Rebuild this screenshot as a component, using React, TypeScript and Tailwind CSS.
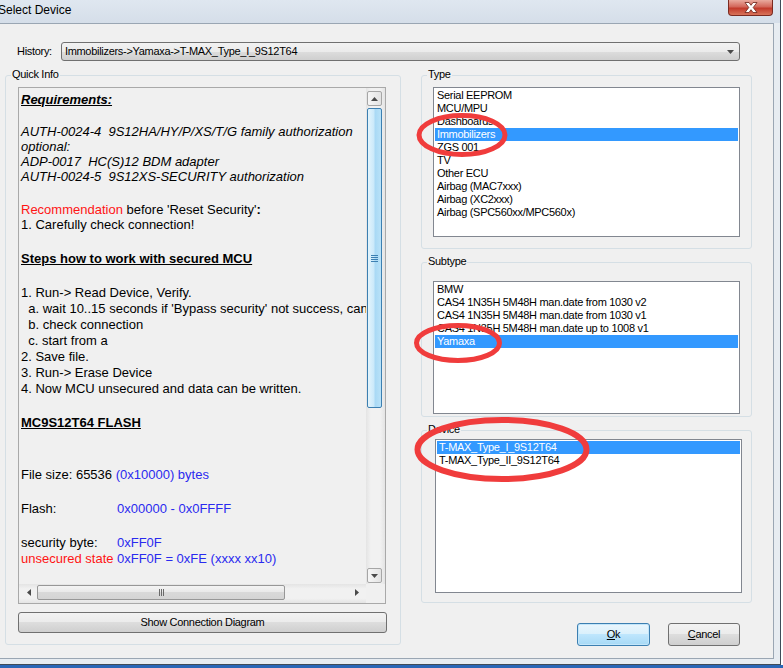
import React from 'react';

const UI = "font-['Liberation_Sans',Arial,sans-serif] text-[11px] tracking-[-0.3px] text-black";
const BTN =
  'border border-[#707070] rounded-[3px] bg-[linear-gradient(#f2f2f2,#ebebeb_50%,#dddddd_50%,#cfcfcf)]';

const typeItems = [
  'Serial EEPROM',
  'MCU/MPU',
  'Dashboards',
  'Immobilizers',
  'ZGS 001',
  'TV',
  'Other ECU',
  'Airbag (MAC7xxx)',
  'Airbag (XC2xxx)',
  'Airbag (SPC560xx/MPC560x)',
];

const subtypeItems = [
  'BMW',
  'CAS4 1N35H 5M48H man.date from 1030 v2',
  'CAS4 1N35H 5M48H man.date from 1030 v1',
  'CAS4 1N35H 5M48H man.date up to 1008 v1',
  'Yamaxa',
];

const deviceItems = ['T-MAX_Type_I_9S12T64', 'T-MAX_Type_II_9S12T64'];

type ListProps = { items: string[]; selected: number; className: string };

const ListBox: React.FC<ListProps> = ({ items, selected, className }) => (
  <div className={`bg-white border border-[#828790] pt-[1px] overflow-hidden ${className}`}>
    {items.map((item, i) => (
      <div
        key={item}
        className={`mx-[1px] h-[13px] leading-[13px] px-[2px] whitespace-nowrap ${
          i === selected ? 'bg-[#3399ff] text-white' : 'text-black'
        }`}
      >
        {item}
      </div>
    ))}
  </div>
);

type GroupProps = { label: string; className: string; children?: React.ReactNode };

const Group: React.FC<GroupProps> = ({ label, className, children }) => (
  <div className={`relative border border-[#d5dfe5] rounded-[3px] ${className}`}>
    <span className="absolute -top-[8px] left-[5px] px-[1px] bg-[#f0f0f0] leading-[13px]">{label}</span>
    {children}
  </div>
);

const Tri = ({ dir }: { dir: 'up' | 'down' | 'left' | 'right' }) => {
  if (dir === 'up' || dir === 'down') {
    return (
      <svg width="7" height="4" viewBox="0 0 7 4">
        <path d={dir === 'up' ? 'M0 4L3.5 0L7 4Z' : 'M0 0H7L3.5 4Z'} fill="#4a4a4a" />
      </svg>
    );
  }
  return (
    <svg width="4" height="7" viewBox="0 0 4 7">
      <path d={dir === 'left' ? 'M4 0V7L0 3.5Z' : 'M0 0V7L4 3.5Z'} fill="#4a4a4a" />
    </svg>
  );
};

const RichText = () => (
  <div className="w-[347px] h-[496px] overflow-hidden pl-[2px] pt-[4px] whitespace-pre font-['Liberation_Sans',Arial,sans-serif] text-[13px] leading-[16px] tracking-normal text-black">
    <div className="font-bold italic underline">Requirements:</div>
    <div className="mt-[16px] italic">AUTH-0024-4  9S12HA/HY/P/XS/T/G family authorization</div>
    <div className="-mt-[1px] italic">optional:</div>
    <div className="-mt-[1px] italic">ADP-0017  HC(S)12 BDM adapter</div>
    <div className="-mt-[1px] italic">AUTH-0024-5  9S12XS-SECURITY authorization</div>
    <div className="mt-[17px]">
      <span className="text-[#ff1414]">Recommendation</span> before 'Reset Security'<span className="font-bold">:</span>
    </div>
    <div className="-mt-[1px]">1. Carefully check connection!</div>
    <div className="mt-[18px] font-bold underline">Steps how to work with secured MCU</div>
    <div className="mt-[18px]">{'1. Run-> Read Device, Verify.'}</div>
    <div>{"  a. wait 10..15 seconds if 'Bypass security' not success, cancel operation"}</div>
    <div>{'  b. check connection'}</div>
    <div>{'  c. start from a'}</div>
    <div>2. Save file.</div>
    <div>{'3. Run-> Erase Device'}</div>
    <div>4. Now MCU unsecured and data can be written.</div>
    <div className="mt-[18px] font-bold underline">MC9S12T64 FLASH</div>
    <div className="mt-[36px]">
      File size: 65536 <span className="text-[#2a2aef]">(0x10000) bytes</span>
    </div>
    <div className="mt-[18px] flex">
      <span className="w-[96px]">Flash:</span>
      <span className="text-[#2a2aef]">0x00000 - 0x0FFFF</span>
    </div>
    <div className="mt-[18px] flex">
      <span className="w-[96px]">security byte:</span>
      <span className="text-[#2a2aef]">0xFF0F</span>
    </div>
    <div className="flex">
      <span className="w-[96px] text-[#ff1414]">unsecured state</span>
      <span className="text-[#2a2aef]">0xFF0F = 0xFE (xxxx xx10)</span>
    </div>
  </div>
);

const VScroll = () => (
  <div className="w-[19px] h-[496px] pl-[1px] pr-[3px] pt-[3px] pb-[1px] flex flex-col gap-[2px] bg-[linear-gradient(90deg,#e4e4e4,#f1f1f1_25%,#f1f1f1_75%,#e4e4e4)]">
    <div className="h-[15px] border border-[#a6a6a6] rounded-[2px] bg-[linear-gradient(90deg,#f6f6f6,#e3e3e3)] flex items-center justify-center">
      <Tri dir="up" />
    </div>
    <div className="h-[300px] border border-[#3c7fb1] rounded-[2px] bg-[linear-gradient(90deg,#e3f4fc,#cbe9fa_45%,#a9d9f5_55%,#b9e2f8)] flex items-center justify-center">
      <div className="flex flex-col gap-[1px]">
        <div className="w-[7px] h-[1px] bg-[#3d80b2]" />
        <div className="w-[7px] h-[1px] bg-[#3d80b2]" />
        <div className="w-[7px] h-[1px] bg-[#3d80b2]" />
        <div className="w-[7px] h-[1px] bg-[#3d80b2]" />
      </div>
    </div>
    <div className="flex-1" />
    <div className="h-[15px] border border-[#a6a6a6] rounded-[2px] bg-[linear-gradient(90deg,#f6f6f6,#e3e3e3)] flex items-center justify-center">
      <Tri dir="down" />
    </div>
  </div>
);

const HScroll = () => (
  <div className="flex h-[19px]">
    <div className="w-[347px] pl-[1px] pr-[1px] pt-[1px] flex items-start bg-[linear-gradient(#e4e4e4,#f1f1f1_25%,#f1f1f1_75%,#e4e4e4)]">
      <div className="w-[17px] h-[15px] flex items-center justify-center">
        <Tri dir="left" />
      </div>
      <div className="w-[248px] h-[15px] border border-[#979797] rounded-[2px] bg-[linear-gradient(#f4f4f4,#e8e8e8_50%,#d9d9d9_50%,#d4d4d4)] flex items-center justify-center">
        <div className="flex gap-[1px]">
          <div className="w-[1px] h-[7px] bg-[#6a6a6a]" />
          <div className="w-[1px] h-[7px] bg-[#6a6a6a]" />
          <div className="w-[1px] h-[7px] bg-[#6a6a6a]" />
        </div>
      </div>
      <div className="flex-1" />
      <div className="w-[17px] h-[15px] flex items-center justify-center">
        <Tri dir="right" />
      </div>
    </div>
    <div className="flex-1 bg-[#f0f0f0]" />
  </div>
);

const App: React.FC = () => {
  return (
    <div className={`relative w-[783px] h-[668px] overflow-hidden bg-white flex flex-col ${UI}`}>
      <div className="flex h-[665px]">
        <div className="w-[781px] flex flex-col border-r border-[#3f4b58]">
          {/* title bar */}
          <div className="h-[23px] flex items-start bg-[linear-gradient(#dfe7f0,#d5dee9)]">
            <span className="ml-[-2px] mt-[3px] text-[12px] tracking-normal leading-[14px]">Select Device</span>
            <div className="flex-1" />
            <div className="mr-[7px] w-[45px] h-[16px] rounded-b-[4px] border border-t-0 border-[#7b2a20] bg-[linear-gradient(#e9aa9e,#d3675a_45%,#c23a2b_55%,#d8745a)] flex items-center justify-center">
              <svg width="14" height="11" viewBox="0 0 14 11">
                <path
                  d="M1 0.5H5L7 3.3L9 0.5H13L9.2 5.5L13 10.5H9L7 7.7L5 10.5H1L4.8 5.5Z"
                  fill="#ffffff"
                  stroke="#6b2218"
                  strokeWidth="0.8"
                />
              </svg>
            </div>
          </div>

          <div className="flex flex-1">
            {/* client area */}
            <div className="w-[774px] h-[636px] bg-[#f0f0f0] border-t border-r border-b border-[#9aa6b3] flex flex-col">
              <div className="mt-[18px] flex items-center pl-[17px] gap-[9px]">
                <span>History:</span>
                <div className={`w-[679px] h-[19px] ${BTN} flex items-center pl-[3px] pr-[5px]`}>
                  <span className="flex-1 whitespace-nowrap">{'Immobilizers->Yamaxa->T-MAX_Type_I_9S12T64'}</span>
                  <Tri dir="down" />
                </div>
              </div>

              <div className="mt-[14px] flex pl-[5px] gap-[20px]">
                {/* left column */}
                <Group label="Quick Info" className="w-[396px] h-[570px] pl-[12px] pt-[11px]">
                  <div className="w-[368px] h-[517px] border border-[#a9a9a9] bg-[#f0f0f0] flex flex-col">
                    <div className="flex">
                      <RichText />
                      <VScroll />
                    </div>
                    <HScroll />
                  </div>
                  <div className={`mt-[8px] w-[369px] h-[21px] ${BTN} flex items-center justify-center`}>
                    Show Connection Diagram
                  </div>
                </Group>

                {/* right column */}
                <div className="w-[331px] flex flex-col">
                  <Group label="Type" className="h-[174px] pl-[11px] pt-[11px]">
                    <ListBox items={typeItems} selected={3} className="w-[307px] h-[150px]" />
                  </Group>
                  <Group label="Subtype" className="mt-[13px] h-[155px] pl-[11px] pt-[18px]">
                    <ListBox items={subtypeItems} selected={4} className="w-[307px] h-[133px]" />
                  </Group>
                  <Group label="Device" className="mt-[13px] h-[173px] pl-[13px] pt-[8px]">
                    <ListBox
                      items={deviceItems}
                      selected={0}
                      className="w-[307px] h-[154px] border-[#7a7a7a]"
                    />
                  </Group>
                  <div className="mt-[20px] flex justify-end gap-[18px] pr-[12px]">
                    <div className="w-[73px] h-[23px] border border-[#3c7fb1] rounded-[3px] bg-[linear-gradient(#eaf6fd,#d9f0fc_50%,#bee6fd_50%,#a7d9f5)] shadow-[inset_0_0_0_1px_#c3e6fa] flex items-center justify-center">
                      <span>
                        <span className="underline">O</span>k
                      </span>
                    </div>
                    <div className={`w-[72px] h-[23px] ${BTN} flex items-center justify-center`}>
                      <span>
                        <span className="underline">C</span>ancel
                      </span>
                    </div>
                  </div>
                </div>
              </div>
            </div>
            <div className="flex-1 bg-[#e7ecf1]" />
          </div>
          <div className="h-[6px] bg-[#e7ecf1] border-b border-[#3f4b58]" />
        </div>
        <div className="flex-1 bg-white" />
      </div>
      <div className="flex-1 bg-[#2a66b6]" />

      {/* red annotation rings */}
      <svg className="absolute inset-0 pointer-events-none" width="783" height="668" viewBox="0 0 783 668">
        <ellipse cx="462" cy="135" rx="43" ry="19.5" fill="none" stroke="#f03c3c" strokeWidth="5" />
        <ellipse cx="458" cy="343" rx="41.5" ry="17.5" fill="none" stroke="#f03c3c" strokeWidth="5" />
        <ellipse cx="502" cy="449.5" rx="84.5" ry="29.5" fill="none" stroke="#f03c3c" strokeWidth="6" />
      </svg>
    </div>
  );
};

export default App;
